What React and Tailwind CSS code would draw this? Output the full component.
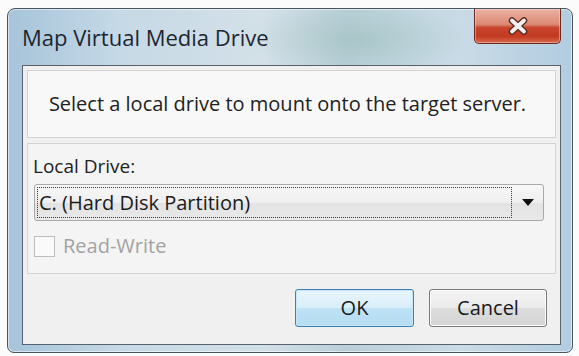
import React from 'react';

const font = { fontFamily: '"Open Sans", "Noto Sans", sans-serif' };

const CloseButton = () => (
    <div className="w-[87px] h-[35px] rounded-b-[5px] border border-t-0 border-[#6b2a1f] bg-[linear-gradient(#eab2a3_0%,#dc8a74_45%,#c8452c_55%,#c23a22_80%,#d86a4c_100%)] shadow-[inset_0_0_0_1px_rgba(255,220,210,0.45)] flex items-center justify-center">
        <svg width="22" height="18" viewBox="0 0 22 18">
            <path d="M5 3.5 L17 14.5 M17 3.5 L5 14.5" stroke="#5b2a22" strokeWidth="6.5" strokeLinecap="round" />
            <path d="M5 3.5 L17 14.5 M17 3.5 L5 14.5" stroke="#f4f0ee" strokeWidth="3.8" strokeLinecap="round" />
        </svg>
    </div>
);

const App = () => {
    return (
        <div className="w-[579px] h-[356px] bg-[#fbfbfb] pt-[8px] pl-[7px]" style={font}>
            {/* Window frame */}
            <div className="w-[566px] h-[345px] rounded-t-[8px] rounded-b-[7px] border border-[#47535d] bg-[radial-gradient(ellipse_110px_35px_at_350px_30px,rgba(130,175,160,0.3),transparent),linear-gradient(90deg,#a6c4da_0%,#c6d9e6_20%,#d3e0e8_45%,#b9cfd9_60%,#c9dbe6_80%,#b2cce0_100%)] shadow-[inset_0_0_0_1px_rgba(255,255,255,0.55)] flex flex-col pl-[14px] pr-[11px] pb-[7px]">
                {/* Title bar */}
                <div className="h-[56px] flex items-start justify-between">
                    <div className="pt-[13px] text-[22px] leading-[30px] text-[#1d2630]">Map Virtual Media Drive</div>
                    <CloseButton />
                </div>

                {/* Client area */}
                <div className="flex-1 border border-[#56636e] bg-[#f0f0f0] flex flex-col px-[4px] pt-[4px]">
                    {/* Prompt box */}
                    <div className="h-[68px] border border-[#d3d3d3] bg-[#f8f8f8] flex items-center justify-center pr-[8px]">
                        <span className="text-[20px] text-[#222]">Select a local drive to mount onto the target server.</span>
                    </div>

                    {/* Drive box */}
                    <div className="mt-[5px] h-[131px] border border-[#d3d3d3] bg-[#f4f4f4] px-[5px] pt-[9px] flex flex-col">
                        <div className="text-[19px] leading-[26px] text-[#222]">Local Drive:</div>
                        <div className="mt-[5px] h-[37px] ml-[1px] mr-[6px] rounded-[3px] border border-[#a8a8a8] bg-[linear-gradient(#f7f7f7_0%,#efefef_50%,#e3e3e3_51%,#e9e9e9_100%)] flex items-center pl-[2px] pr-[9px]">
                            <div className="h-[31px] w-[475px] border border-dotted border-[#3a3a3a] flex items-center text-[20px] text-[#1a1a1a] pl-[1px]">
                                C: (Hard Disk Partition)
                            </div>
                            <div className="flex-1 flex justify-end">
                                <svg width="12" height="7" viewBox="0 0 12 7">
                                    <path d="M0 0 L12 0 L6 7 Z" fill="#111" />
                                </svg>
                            </div>
                        </div>
                        <div className="mt-[10px] flex items-center gap-[8px]">
                            <div className="w-[21px] h-[21px] ml-[1px] border border-[#bdbdbd] bg-[#fafafa]" />
                            <span className="text-[20px] text-[#a3a3a3]">Read-Write</span>
                        </div>
                    </div>

                    {/* Buttons */}
                    <div className="flex-1 flex items-center justify-end gap-[15px] pr-[9px] pb-[2px]">
                        <button className="w-[119px] h-[38px] rounded-[3px] border border-[#3d7fb0] bg-[linear-gradient(#e9f5fc_0%,#d9eefa_50%,#bfe2f5_51%,#b4dbf1_100%)] shadow-[inset_0_0_0_1px_#c5e8f8] text-[20px] text-[#1a1a1a]">
                            OK
                        </button>
                        <button className="w-[118px] h-[38px] rounded-[3px] border border-[#7a7a7a] bg-[linear-gradient(#f4f4f4_0%,#ebebeb_50%,#dddddd_51%,#d4d4d4_100%)] shadow-[inset_0_0_0_1px_#fcfcfc] text-[20px] text-[#1a1a1a]">
                            Cancel
                        </button>
                    </div>
                </div>
            </div>
        </div>
    );
};

export default App;
